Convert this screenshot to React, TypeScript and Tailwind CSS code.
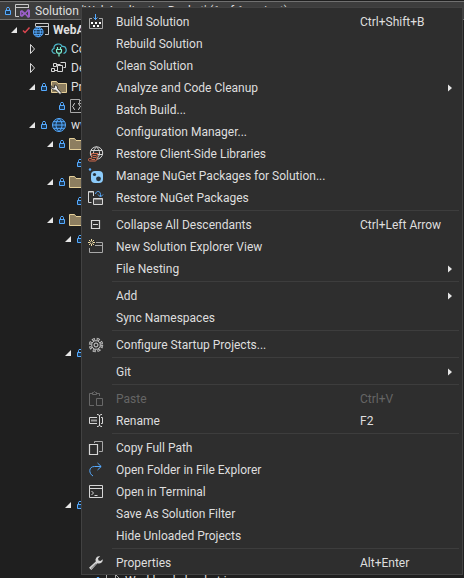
import type { ReactNode } from "react";

const BLUE = "#55aaff";
const LIGHT = "#d6d6d6";

function Icon({ children, size = 16 }: { children: ReactNode; size?: number }) {
  return (
    <svg width={size} height={size} viewBox="0 0 16 16" fill="none" stroke={LIGHT} strokeWidth="1" className="block shrink-0" aria-hidden="true">
      {children}
    </svg>
  );
}

const buildIcon = (
  <Icon>
    <path d="M7.500 0v6M5.500 3.500l2 2 2-2" stroke={BLUE} />
    <path d="M4 4.500H1.500v10h13v-10H11" stroke="#a8a8a8" />
    <path d="M3 8h2v2H3zM7 8h2v2H7zM11 8h2v2h-2zM5 11h2v2H5zM9 11h2v2H9z" fill="#fff" stroke="none" />
  </Icon>
);
const clientLibIcon = (
  <Icon>
    <circle cx="8.500" cy="7" r="6.200" />
    <path d="M3 4.500h11M2.500 8.500h12M8.500 1c-4 3-4 9 0 12M8.500 1c4 3 4 9 0 12" />
    <path d="M3.500 7.500H10c-1 1-1 2-1 3.500 0 3-.5 4-2 4H1.500c-1.500 0-1.500-2.500 0-2.500h2c.8-1.500.5-3 0-5z" fill="#2e2e2e" stroke="#d0694c" />
    <path d="M5 9.500h3M5 11.500h3M3.500 13.500H7" stroke="#d0694c" />
  </Icon>
);
const nugetIcon = (
  <Icon>
    <rect x="3" y="3" width="12" height="12" rx="4" fill="#8ccbfa" stroke="none" />
    <circle cx="6.500" cy="6.500" r="1.600" fill="#26333d" stroke="none" />
    <circle cx="10.500" cy="10.800" r="2.400" fill="#26333d" stroke="none" />
    <circle cx="2" cy="1.500" r="1.200" fill={BLUE} stroke="none" />
  </Icon>
);
const restoreIcon = (
  <Icon>
    <path d="M3.500 12.500h-3V1.500h5V6M.5 2h5" />
    <path d="M5.500 14.500v-6h9v6zM5.500 9h9" fill="#484848" />
    <path d="M7.500 4c.5-3.500 5-3.500 5 .5v2M10 4.500l2.500 2.500L15 4.500" stroke={BLUE} />
  </Icon>
);
const collapseIcon = (
  <Icon>
    <path d="M3.500 3.500h8v8h-8zM5 7.500h5" strokeWidth="1.200" />
  </Icon>
);
const newViewIcon = (
  <Icon>
    <path d="M8 3.500h6.500v10h-13V9M7 6.500h7.500" stroke="#a8a8a8" />
    <path d="M3.500 0v7M0 3.500h7M1 1l5 5M6 1L1 6" stroke="#ecd9a2" />
    <circle cx="3.500" cy="3.500" r="1.200" fill="#2e2e2e" stroke="none" />
  </Icon>
);
const gearIcon = (
  <Icon>
    <circle cx="8" cy="8" r="6" stroke="#c4c4c4" strokeWidth="2.400" strokeDasharray="3 1.712" />
    <circle cx="8" cy="8" r="6" stroke="#2e2e2e" strokeWidth=".8" strokeDasharray="1.600 3.112" strokeDashoffset="-.7" />
    <circle cx="8" cy="8" r="4.300" stroke="#c4c4c4" />
    <circle cx="8" cy="8" r="2" />
  </Icon>
);
const pasteIcon = (
  <Icon>
    <path d="M6 14.500H1.500v-12H4M9 2.500h2.500V5M4.500 3.500v-2h1l1-1 1 1h1v2zM8.500 7.500h6v7h-6z" stroke="#686868" />
  </Icon>
);
const renameIcon = (
  <Icon>
    <path d="M9 4.500H1.500v6H9M13 4.500h1.500v6H13" />
    <path d="M3 6.500h6v2H3z" fill="#999" stroke="none" />
    <path d="M9 1.500h1l1.500 1 1.500-1h1M11.500 2v11M9 13.500h1l1.500-1 1.500 1h1" />
  </Icon>
);
const copyIcon = (
  <Icon>
    <path d="M6.500 3V1.500h8v10H11" stroke="#a8a8a8" />
    <path d="M1.500 4.500h8v10h-8z" strokeWidth="1.200" />
  </Icon>
);
const openIcon = (
  <Icon>
    <path d="M13 4.500H6.500c-6 0-6 7-1.500 9.500M9.500 1l3.700 3.500L9.500 8" stroke={BLUE} />
  </Icon>
);
const terminalIcon = (
  <Icon>
    <path d="M1.500 1.500h13v12h-13zM1.500 4.500h13" />
    <path d="M3.500 7l2 2-2 2M6.500 11.500h3" />
  </Icon>
);
const wrench = "M14.800 4.200a3.800 3.800 0 0 1-5.300 4L3.300 15 1 12.700l6.800-6.200a3.800 3.800 0 0 1 4.400-5.200L10 3.500l.5 2 2 .5z";
const wrenchIcon = (
  <Icon>
    <path d={wrench} fill={LIGHT} stroke="none" />
    <path d="M8.300 8.500L3 13.600" stroke="#777" />
  </Icon>
);

const solutionIcon = (
  <Icon>
    <path d="M4 13.500H.5v-12h13V5M.5 4.500h13" stroke="#c8c8c8" />
    <path d="M5 8l2-1 3 2.500L13 6l2 1v7l-2 1-3-3.500L7 14l-2-1z" fill="#9b5fc9" stroke="none" />
    <path d="M6.500 9l1.500 1.500L6.500 12zM13 8.500v4l-2-2z" fill="#3d3d3d" stroke="none" />
  </Icon>
);
const globePaths = (
  <>
    <circle cx="8" cy="8" r="6.500" fill="#1b3854" />
    <path d="M1.500 8h13M2.500 4.700h11M2.500 11.300h11M8 1.500c-4 3-4 10 0 13M8 1.500c4 3 4 10 0 13" />
  </>
);
const globeIcon = (
  <Icon>
    <g stroke={BLUE}>{globePaths}</g>
  </Icon>
);
const webProjectIcon = (
  <Icon>
    <path d="M2.500 4V1.500h13v11H12M2.500 4.500h13" stroke="#c8c8c8" />
    <g stroke={BLUE} transform="translate(-.8 4) scale(.75)" strokeWidth="1.300">{globePaths}</g>
  </Icon>
);
const cloudIcon = (
  <Icon>
    <path d="M4.500 12.500C1 12.500-.5 8.500 3 7.500c-.5-5 7-6 8-2 5-.5 5.500 6 1.500 7" stroke="#4db8cc" strokeWidth="1.200" />
    <path d="M6.500 6v2.500M9.500 6v2.500M5 8.500h6M5.500 9v1c0 3 5 3 5 0V9M8 12v3.500" stroke="#7dedcc" strokeWidth="1.200" />
  </Icon>
);
const dependencyIcon = (
  <Icon>
    <path d="M2.500 3.500h3v3h-3zM.5 8.500h3v3h-3zM9.500 2.500h5v5h-2M6.500 5.500h5v6h-5zM5.500 4.500h4M3.500 10.500h3" />
  </Icon>
);
const folderPath = <path d="M.5 2.500h5l1.500 2h8.500v9H.5z" fill="#8d7e60" stroke="#e5cf98" />;
const folderIcon = <Icon>{folderPath}</Icon>;
const propertiesFolderIcon = (
  <Icon>
    {folderPath}
    <path d="M0 6.500C0 10 2 11.500 4.500 11L9 15.500l1.500-1.500L6.500 9.500C7 7.500 5.500 6 3.500 6v2.500L2 9z" fill="#ececec" stroke="#202020" strokeWidth=".8" />
  </Icon>
);
const jsonIcon = (
  <Icon>
    <path d="M1.500 1.500h9l4 4v9h-13zM10.500 1.500v4h4" stroke="#a8a8a8" />
    <path d="M6 5.500c-2 0-1 2.500-2.500 3 1.500.5.5 3 2.500 3M9 5.500c2 0 1 2.500 2.500 3-1.500.5-.5 3-2.500 3" />
  </Icon>
);

const lock = (
  <svg width="10" height="10" viewBox="0 0 10 10" fill="none" stroke={BLUE} className="block" aria-hidden="true">
    <path d="M2.500 4.500h5v4h-5z" fill="#1b3854" />
    <path d="M3.500 4V2.500c0-1.500 3-1.500 3 0V4" />
  </svg>
);
const check = (
  <svg width="10" height="10" viewBox="0 0 10 10" fill="none" stroke="#dc4650" strokeWidth="1.500" className="block" aria-hidden="true">
    <path d="M2 5.500l2 2 4.500-5" />
  </svg>
);

type Expander = "open" | "closed";
type TreeRow = { level: number; label?: string; icon?: ReactNode; mark?: ReactNode; expander?: Expander; bold?: boolean };

const rows: TreeRow[] = [
  { level: 0, label: "Solution 'WebApplicationBasket' (1 of 1 project)", icon: solutionIcon, mark: lock },
  { level: 1, label: "WebApplicationBasket", icon: webProjectIcon, mark: check, expander: "open", bold: true },
  { level: 2, label: "Connected Services", icon: cloudIcon, expander: "closed" },
  { level: 2, label: "Dependencies", icon: dependencyIcon, expander: "closed" },
  { level: 2, label: "Properties", icon: propertiesFolderIcon, mark: lock, expander: "open" },
  { level: 3, icon: jsonIcon, mark: lock },
  { level: 2, label: "wwwroot", icon: globeIcon, mark: lock, expander: "open" },
  { level: 3, icon: folderIcon, mark: lock, expander: "open" },
  { level: 4, mark: lock },
  { level: 3, icon: folderIcon, mark: lock, expander: "open" },
  { level: 4, mark: lock },
  { level: 3, icon: folderIcon, mark: lock, expander: "open" },
  { level: 4, mark: lock, expander: "open" },
  ...Array.from({ length: 5 }, () => ({ level: 4 })),
  { level: 4, mark: lock, expander: "open" },
  ...Array.from({ length: 7 }, () => ({ level: 4 })),
  { level: 4, mark: lock, expander: "open" },
  ...Array.from({ length: 3 }, () => ({ level: 4 })),
  { level: 5, label: "Workloads.basket.js", icon: jsonIcon, mark: lock },
];

const indents = ["pl-[3px]", "pl-2", "pl-[26px]", "pl-11", "pl-[62px]", "pl-20"];

function Row({ row }: { row: TreeRow }) {
  const root = row.level === 0;
  return (
    <li
      role="treeitem"
      aria-selected={root}
      className={`flex h-[19px] shrink-0 items-center whitespace-nowrap ${indents[row.level]} ${root ? "border-y border-[#707070] bg-[#3d3d3d]" : ""}`}
    >
      {!root && (
        <span className="w-[13px] shrink-0">
          {row.expander && (
            <svg width="12" height="12" viewBox="0 0 12 12" className="block" aria-hidden="true">
              {row.expander === "open" ? (
                <path d="M9 3v6H3z" fill="#e6e6e6" />
              ) : (
                <path d="M4.500 1.500l4 4.500-4 4.500z" fill="none" stroke="#dcdcdc" />
              )}
            </svg>
          )}
        </span>
      )}
      <span className="mr-0.5 w-2.5 shrink-0">{row.mark}</span>
      {row.icon}
      {row.label && <span className={`ml-1 ${row.bold ? "font-bold" : ""}`}>{row.label}</span>}
    </li>
  );
}

type Item = { label: string; icon?: ReactNode; keys?: string; submenu?: boolean; disabled?: boolean };

const groups: Item[][] = [
  [
    { label: "Build Solution", icon: buildIcon, keys: "Ctrl+Shift+B" },
    { label: "Rebuild Solution" },
    { label: "Clean Solution" },
    { label: "Analyze and Code Cleanup", submenu: true },
    { label: "Batch Build..." },
    { label: "Configuration Manager..." },
    { label: "Restore Client-Side Libraries", icon: clientLibIcon },
    { label: "Manage NuGet Packages for Solution...", icon: nugetIcon },
    { label: "Restore NuGet Packages", icon: restoreIcon },
  ],
  [
    { label: "Collapse All Descendants", icon: collapseIcon, keys: "Ctrl+Left Arrow" },
    { label: "New Solution Explorer View", icon: newViewIcon },
    { label: "File Nesting", submenu: true },
  ],
  [{ label: "Add", submenu: true }, { label: "Sync Namespaces" }],
  [{ label: "Configure Startup Projects...", icon: gearIcon }],
  [{ label: "Git", submenu: true }],
  [
    { label: "Paste", icon: pasteIcon, keys: "Ctrl+V", disabled: true },
    { label: "Rename", icon: renameIcon, keys: "F2" },
  ],
  [
    { label: "Copy Full Path", icon: copyIcon },
    { label: "Open Folder in File Explorer", icon: openIcon },
    { label: "Open in Terminal", icon: terminalIcon },
    { label: "Save As Solution Filter" },
    { label: "Hide Unloaded Projects" },
  ],
  [{ label: "Properties", icon: wrenchIcon, keys: "Alt+Enter" }],
];

function MenuItem({ item }: { item: Item }) {
  return (
    <button
      type="button"
      role="menuitem"
      disabled={item.disabled}
      aria-haspopup={item.submenu ? "menu" : undefined}
      className="flex h-[22px] w-full items-center whitespace-nowrap pl-1.5 pr-2.5 text-left hover:bg-[#3d3d3d] disabled:text-[#656565]"
    >
      <span className="w-7 shrink-0">{item.icon}</span>
      <span className="flex-1">{item.label}</span>
      {item.keys && <span className="w-[92px] shrink-0">{item.keys}</span>}
      {item.submenu && (
        <svg width="4" height="8" viewBox="0 0 4 8" className="block" aria-hidden="true">
          <path d="M0 0.500v7L4 4z" fill="#e6e6e6" />
        </svg>
      )}
    </button>
  );
}

export default function App() {
  return (
    <main className="relative h-screen overflow-hidden bg-[#1f1f1f] font-[Roboto,sans-serif] text-xs text-[#dedede]">
      <ul role="tree" aria-label="Solution Explorer" className="flex flex-col pt-px">
        {rows.map((row, i) => (
          <Row key={i} row={row} />
        ))}
      </ul>
      <div role="menu" aria-label="Solution" className="absolute left-[81px] right-px top-[7px] border border-[#424242] bg-[#2e2e2e] pt-[3px]">
        {groups.map((group, i) => (
          <div key={i} role="group">
            {i > 0 && <hr className="mb-[3px] ml-[30px] mr-[3px] mt-px border-[#3d3d3d]" />}
            {group.map((item) => (
              <MenuItem key={item.label} item={item} />
            ))}
          </div>
        ))}
      </div>
    </main>
  );
}
